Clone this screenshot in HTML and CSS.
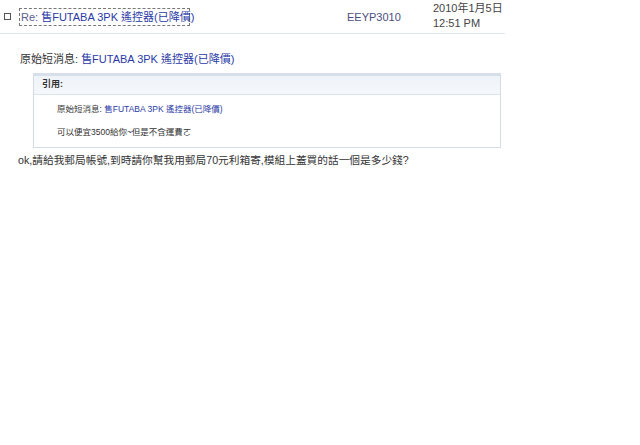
FILE: index.html
```html
<!DOCTYPE html>
<html>
<head>
<meta charset="utf-8">
<link rel="stylesheet" href="styles.css">
</head>
<body>
<div class="page">
  <div class="row">
    <span class="check"></span>
    <a class="subject"><span class="re">Re:</span> 售FUTABA 3PK 遙控器(已降價)</a>
    <span class="from">EEYP3010</span>
    <span class="date">2010年1月5日<br>12:51 PM</span>
  </div>
  <div class="body">
    <p class="orig">原始短消息: <a class="link">售FUTABA 3PK 遙控器(已降價)</a></p>
    <div class="quote">
      <div class="quote-head">引用:</div>
      <div class="quote-body">
        <p class="q-line">原始短消息: <a class="link">售FUTABA 3PK 遙控器(已降價)</a></p>
        <p class="q-line">可以便宜3500給你~但是不含運費ㄛ</p>
      </div>
    </div>
    <p class="reply">ok,請給我郵局帳號,到時請你幫我用郵局70元利箱寄,模組上蓋買的話一個是多少錢?</p>
  </div>
</div>
</body>
</html>
```
FILE: styles.css
```css
html, body {
  margin: 0;
  padding: 0;
  background: #fff;
}
body {
  font-family: "Liberation Sans", "Noto Sans CJK TC", sans-serif;
  color: #333;
}
.page {
  width: 640px;
  height: 445px;
}
.row {
  display: flex;
  align-items: center;
  width: 505px;
  height: 33px;
  border-bottom: 1px solid #dfe6ee;
  font-size: 11px;
}
.check {
  width: 5px;
  height: 5px;
  border: 1px solid #555;
  margin-left: 4px;
  margin-right: 8px;
}
.subject {
  color: #2a3aa6;
  border: 1px dashed #777;
  padding: 2px 1px;
  width: 167px;
  white-space: nowrap;
  line-height: 12px;
}
.re {
  color: #5a6090;
}
.from {
  margin-left: 157px;
  color: #4a4e80;
  width: 86px;
}
.date {
  color: #444;
  line-height: 15px;
  margin-top: -2px;
  white-space: nowrap;
}
.body {
  padding-left: 20px;
}
.orig {
  margin: 18px 0 0 0;
  font-size: 11px;
  line-height: 14px;
  color: #333;
}
.link {
  color: #2a3aa6;
}
.quote {
  margin: 7px 0 0 13px;
  width: 466px;
  border: 1px solid #d3dbe4;
  border-top: 3px solid #d6dfea;
}
.quote-head {
  height: 18px;
  line-height: 17px;
  padding-left: 8px;
  font-size: 9px;
  font-weight: bold;
  color: #333;
  background: linear-gradient(#eef3f9, #f5f8fb);
  border-bottom: 1px solid #dbe3ec;
}
.quote-body {
  padding: 8px 0 9px 23px;
}
.q-line {
  margin: 0;
  font-size: 8.5px;
  line-height: 12px;
  color: #333;
}
.q-line + .q-line {
  margin-top: 11px;
}
.reply {
  margin: 5px 0 0 -2px;
  font-size: 10.7px;
  line-height: 14px;
  color: #333;
}
```
